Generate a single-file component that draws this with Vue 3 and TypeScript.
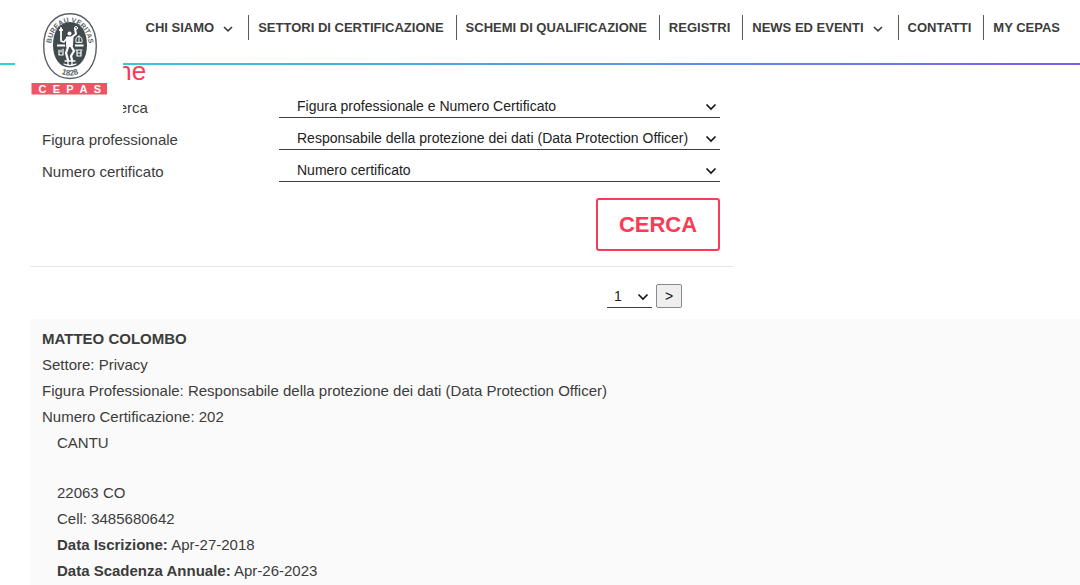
<script setup lang="ts">
import { ref } from 'vue'

interface NavItem {
  label: string
  menu?: boolean
}

interface Field {
  id: string
  label: string
  options: string[]
}

const navItems: NavItem[] = [
  { label: 'CHI SIAMO', menu: true },
  { label: 'SETTORI DI CERTIFICAZIONE' },
  { label: 'SCHEMI DI QUALIFICAZIONE' },
  { label: 'REGISTRI' },
  { label: 'NEWS ED EVENTI', menu: true },
  { label: 'CONTATTI' },
  { label: 'MY CEPAS' },
]

const fields: Field[] = [
  { id: 'mode', label: 'Modalità ricerca', options: ['Figura professionale e Numero Certificato'] },
  {
    id: 'role',
    label: 'Figura professionale',
    options: ['Responsabile della protezione dei dati (Data Protection Officer)'],
  },
  { id: 'number', label: 'Numero certificato', options: ['Numero certificato'] },
]

const values = ref<string[]>(fields.map((f) => f.options[0]))
const page = ref<number>(1)
</script>

<template>
  <div class="page">
    <header class="header">
      <a class="logo" href="#" aria-label="Bureau Veritas Cepas">
        <svg viewBox="0 0 108 120" width="108" height="120">
          <defs>
            <path id="arc-top" d="M36.5 53 A19 25 0 1 1 73.5 53" />
            <path id="arc-bottom" d="M33 58 A24 29.5 0 0 0 77 58" />
          </defs>
          <path
            d="M55 13.7 C71 13.7 81.3 27 81.3 46 C81.3 65 71 78.5 55 78.5 C39 78.5 28.7 65 28.7 46 C28.7 27 39 13.7 55 13.7 Z"
            fill="#fff"
            stroke="#596265"
            stroke-width="1.4"
          />
          <path
            d="M55 22 C65.5 22 72 31 72 45 C72 58.5 65.5 67.5 55 67.5 C44.5 67.5 38 58.5 38 45 C38 31 44.5 22 55 22 Z"
            fill="#414b4e"
          />
          <text class="ring" font-size="7"><textPath href="#arc-top" startOffset="50%" text-anchor="middle">BUREAU VERITAS</textPath></text>
          <text class="ring" font-size="8"><textPath href="#arc-bottom" startOffset="50%" text-anchor="middle">1828</textPath></text>
          <g fill="none" stroke="#fff" stroke-linecap="round" stroke-linejoin="round">
            <circle cx="54.5" cy="33.5" r="2" fill="#fff" stroke="none" />
            <path d="M52 37 L58 37 L57.5 46 L52 47 Z" fill="#fff" stroke-width="1" />
            <path d="M57 37 L61 34 L60 29" stroke-width="2" />
            <path d="M52 38 L49 42 L46 41" stroke-width="1.6" />
            <path d="M53 47 L51 53 L53 60 M56 46 L59 51 L56 56 L57 60" stroke-width="2.3" />
            <path d="M46 28 V36 M44.8 30 H47.2 M46 37 V40" stroke-width="1.8" />
            <circle cx="61" cy="28" r="1.5" stroke-width="1" />
            <path d="M61 42 Q60 37 64 36 Q68 38 67 42 Z M64 36 V42" stroke-width="1" />
            <path d="M42 45.5 H50 M60 45.5 H68.5" stroke-width="2" stroke-linecap="butt" />
            <path d="M44 50 V55 H48 V49 M46 50 V52 M61 50 H67 M62 53 H66 M62 50 V56 H66 V51" stroke-width="1.2" />
            <path d="M50 61 H60 M49 64 Q55 67 61 64 M53 62 V65 M57 62 V65" stroke-width="1.3" />
          </g>
          <rect x="16.5" y="83" width="75.5" height="11.5" fill="#ed5565" />
          <g class="brand" font-size="11" text-anchor="middle">
            <text x="27.5" y="92.7">C</text>
            <text x="41.5" y="92.7">E</text>
            <text x="55" y="92.7">P</text>
            <text x="68.5" y="92.7">A</text>
            <text x="82.5" y="92.7">S</text>
          </g>
        </svg>
      </a>
      <nav class="nav">
        <a v-for="item in navItems" :key="item.label" class="nav-item" href="#">
          {{ item.label }}
          <svg v-if="item.menu" class="nav-chevron" viewBox="0 0 10 6" width="10" height="6">
            <path d="M1 1 L5 4.8 L9 1" />
          </svg>
        </a>
      </nav>
    </header>

    <main class="content">
      <form class="search" @submit.prevent>
        <h1 class="title">Selezione</h1>
        <div v-for="(field, i) in fields" :key="field.id" class="row">
          <label class="label" :for="field.id">{{ field.label }}</label>
          <span class="picker">
            <select :id="field.id" v-model="values[i]" class="select">
              <option v-for="opt in field.options" :key="opt" :value="opt">{{ opt }}</option>
            </select>
            <svg class="chevron" viewBox="0 0 12 8" width="12" height="8">
              <path d="M1.5 1.5 L6 6 L10.5 1.5" />
            </svg>
          </span>
        </div>
        <div class="actions">
          <button class="submit" type="submit">CERCA</button>
        </div>
      </form>

      <div class="pager">
        <span class="picker page-picker">
          <select v-model="page" class="select page-select" aria-label="Pagina">
            <option :value="1">1</option>
            <option :value="2">2</option>
          </select>
          <svg class="chevron" viewBox="0 0 12 8" width="12" height="8">
            <path d="M1.5 1.5 L6 6 L10.5 1.5" />
          </svg>
        </span>
        <button class="next" type="button">&gt;</button>
      </div>

      <article class="card">
        <strong>MATTEO COLOMBO</strong>
        <div>Settore: Privacy</div>
        <div>Figura Professionale: Responsabile della protezione dei dati (Data Protection Officer)</div>
        <div>Numero Certificazione: 202</div>
        <div class="details">
          <div class="city">CANTU</div>
          <div>22063 CO</div>
          <div>Cell: 3485680642</div>
          <div><strong>Data Iscrizione:</strong> Apr-27-2018</div>
          <div><strong>Data Scadenza Annuale:</strong> Apr-26-2023</div>
        </div>
      </article>
    </main>
  </div>
</template>

<style>
html,
body {
  overflow: hidden;
  background: #fff;
}
</style>

<style scoped>
.page,
.page * {
  box-sizing: border-box;
}
.page {
  font-family: 'Liberation Sans', Arial, sans-serif;
  font-size: 15px;
  color: #3c3c3b;
}
.header {
  position: fixed;
  z-index: 2;
  top: 0;
  left: 0;
  right: 0;
  padding: 15px 20px 23px 136px;
  background: #fff;
}
.header::after {
  content: '';
  position: absolute;
  left: 0;
  right: 0;
  bottom: -2px;
  height: 2px;
  background: linear-gradient(90deg, #2fd3d6, #4fa6e0 40%, #6a84e6 75%, #7c5cea);
}
.logo {
  position: absolute;
  z-index: 1;
  top: 0;
  left: 15px;
  width: 108px;
  height: 120px;
  background: #fff;
}
.logo svg {
  display: block;
}
.ring {
  font-weight: bold;
  fill: #596265;
}
.brand {
  font-weight: bold;
  fill: #fff;
}
.nav {
  display: flex;
  justify-content: flex-end;
}
.nav-item {
  display: flex;
  align-items: center;
  height: 25px;
  padding: 0 12px 0 9px;
  border-right: 1px solid #5a5a5a;
  font-size: 13px;
  font-weight: bold;
  color: #3c3c3b;
  text-decoration: none;
  white-space: nowrap;
}
.nav-item:last-child {
  padding-right: 0;
  border-right: 0;
}
.nav-chevron {
  margin: 2px 3px 0 9px;
  fill: none;
  stroke: #3c3c3b;
  stroke-width: 1.6;
}
.content {
  padding-top: 56px;
  padding-left: 30px;
}
.search {
  max-width: 703px;
  padding-bottom: 15px;
  border-bottom: 1px solid #e6e6e6;
}
.title {
  margin: 0;
  padding-left: 2px;
  font-size: 26px;
  font-weight: normal;
  line-height: 30px;
  color: #fb3a55;
}
.row {
  display: grid;
  grid-template-columns: 237px 1fr;
  align-items: end;
  height: 32px;
  padding: 0 13px 0 12px;
}
.label {
  line-height: 20px;
}
.picker {
  position: relative;
  display: block;
  min-width: 0;
}
.select {
  display: block;
  width: 100%;
  height: 24px;
  padding: 0 21px 0 18px;
  appearance: none;
  border: 0;
  border-bottom: 1px solid #3f3f3f;
  border-radius: 0;
  background: transparent;
  font-family: inherit;
  font-size: 14px;
  color: #222;
  white-space: nowrap;
}
.chevron {
  position: absolute;
  top: 9px;
  right: 3px;
  fill: none;
  stroke: #111;
  stroke-width: 1.6;
  pointer-events: none;
}
.actions {
  display: flex;
  justify-content: flex-end;
  padding: 16px 13px 0 0;
}
.submit {
  width: 124px;
  height: 53px;
  border: 2px solid #fb3a55;
  border-radius: 3px;
  background: #fff;
  font-family: inherit;
  font-size: 22px;
  font-weight: bold;
  color: #fb3a55;
}
.pager {
  display: flex;
  gap: 4px;
  max-width: 703px;
  justify-content: flex-end;
  padding: 17px 51px 11px 0;
}
.page-picker {
  width: 45px;
}
.page-select {
  padding: 0 12px 0 7px;
}
.next {
  width: 26px;
  height: 24px;
  padding: 0;
  border: 1px solid #8a8a8a;
  border-radius: 2px;
  background: #efefef;
  font-family: inherit;
  font-size: 14px;
  color: #111;
}
.card {
  padding: 7px 12px;
  background: #fafafa;
  line-height: 26px;
}
.details {
  padding-left: 15px;
}
.city {
  margin-bottom: 24px;
}
</style>
